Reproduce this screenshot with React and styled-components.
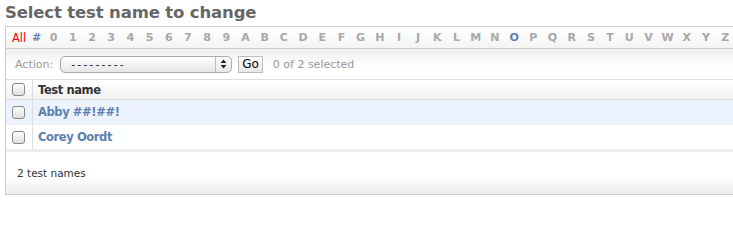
import React from "react";
import styled, { createGlobalStyle } from "styled-components";

const GlobalStyle = createGlobalStyle`
  body {
    margin: 0;
    background: #fff;
    font-family: "Lucida Grande", "DejaVu Sans", Verdana, sans-serif;
    color: #333;
  }
`;

const Page = styled.div`
  padding: 3px 0 0 5px;
  width: 760px;
`;

const Title = styled.h1`
  margin: 0 0 3px 0;
  font-size: 16.5px;
  font-weight: bold;
  color: #666;
  line-height: 20px;
  letter-spacing: -0.15px;
`;

const Module = styled.div`
  border: 1px solid #ccc;
  border-right: none;
`;

const AlphaBar = styled.div`
  display: flex;
  align-items: center;
  height: 21px;
  padding: 0 0 0 6px;
  border-bottom: 1px solid #ccc;
  background: linear-gradient(#fff, #f4f4f4);
  font-size: 11px;
`;

const Lead = styled.span`
  width: ${(p) => p.$w}px;
  flex: none;
  font-weight: ${(p) => (p.$all ? "normal" : "bold")};
  color: ${(p) => (p.$all ? "#f00" : "#5b80b2")};
  font-size: ${(p) => (p.$all ? "11.5px" : "11px")};
`;

const Letter = styled.span`
  display: flex;
  justify-content: center;
  flex: none;
  width: 19.2px;
  font-weight: bold;
  color: ${(p) => (p.$active ? "#5b80b2" : "#a8a8a8")};
`;

const ActionBar = styled.div`
  display: flex;
  align-items: center;
  height: 30px;
  padding-left: 9px;
  border-bottom: 1px solid #ddd;
  background: linear-gradient(#eee, #fff 60%);
  font-size: 11px;
  color: #999;
`;

const Select = styled.div`
  display: flex;
  align-items: center;
  width: 172px;
  height: 17px;
  margin: 0 6px 0 7px;
  border: 1px solid #aaa;
  border-radius: 5px;
  background: linear-gradient(#fff, #e6e6e6);
  font-size: 11px;
  color: #222;
  position: relative;
  padding-left: 10px;
  box-sizing: border-box;
  letter-spacing: 2.1px;
`;

const Arrows = styled.span`
  position: absolute;
  right: 0;
  top: 0;
  bottom: 0;
  width: 15px;
  border-left: 1px solid #bbb;
  display: flex;
  align-items: center;
  justify-content: center;
`;

const GoButton = styled.span`
  display: inline-block;
  height: 15px;
  line-height: 15px;
  padding: 0 3px;
  border: 1px solid #bbb;
  background: linear-gradient(#fff, #e8e8e8);
  color: #000;
  font-size: 12px;
  margin-right: 10px;
`;

const Table = styled.div`
  display: grid;
  grid-template-columns: 27px 1fr;
`;

const Cell = styled.div`
  display: flex;
  align-items: center;
  height: ${(p) => (p.$head ? "19px" : "24px")};
  padding-left: ${(p) => (p.$check ? "6px" : "5px")};
  border-right: ${(p) => (p.$check ? "1px solid #ddd" : "none")};
  border-bottom: 1px solid ${(p) => (p.$head ? "#ddd" : "#eee")};
  background: ${(p) =>
    p.$head ? "linear-gradient(#fff, #f2f2f2)" : p.$alt ? "#edf3fe" : "#fff"};
  font-size: 11.5px;
  letter-spacing: -0.4px;
  font-weight: bold;
  color: ${(p) => (p.$head ? "#333" : "#5b80b2")};
`;

const Box = styled.span`
  width: 11px;
  height: 11px;
  border: 1px solid #888;
  border-radius: 3px;
  background: linear-gradient(#fff, #ddd);
  box-shadow: inset 0 1px 1px #fff;
`;

const Footer = styled.div`
  border-top: 2px solid #eee;
  height: 42px;
  display: flex;
  align-items: center;
  padding: 0 0 0 11px;
  font-size: 10.5px;
  color: #333;
  background: linear-gradient(#fff 60%, #ececec);
`;

const letters = "0123456789ABCDEFGHIJKLMNOPQRSTUVWXYZ".split("");

const rows = ["Abby ##!##!", "Corey Oordt"];

export default function App() {
  return (
    <Page>
      <GlobalStyle />
      <Title>Select test name to change</Title>
      <Module>
        <AlphaBar>
          <Lead $all $w={20}>All</Lead>
          <Lead $w={12}>#</Lead>
          {letters.map((l) => (
            <Letter key={l} $active={l === "O"}>
              {l}
            </Letter>
          ))}
        </AlphaBar>
        <ActionBar>
          Action:
          <Select>
            ---------
            <Arrows>
              <svg width="7" height="10" viewBox="0 0 7 10">
                <path d="M3.5 0.5 L6.5 4 H0.5 Z" fill="#222" />
                <path d="M3.5 9.5 L6.5 6 H0.5 Z" fill="#222" />
              </svg>
            </Arrows>
          </Select>
          <GoButton>Go</GoButton>
          0 of 2 selected
        </ActionBar>
        <Table>
          <Cell $head $check>
            <Box />
          </Cell>
          <Cell $head>Test name</Cell>
          {rows.map((r, i) => (
            <React.Fragment key={r}>
              <Cell $check $alt={i === 0}>
                <Box />
              </Cell>
              <Cell $alt={i === 0}>{r}</Cell>
            </React.Fragment>
          ))}
        </Table>
        <Footer>2 test names</Footer>
      </Module>
    </Page>
  );
}
